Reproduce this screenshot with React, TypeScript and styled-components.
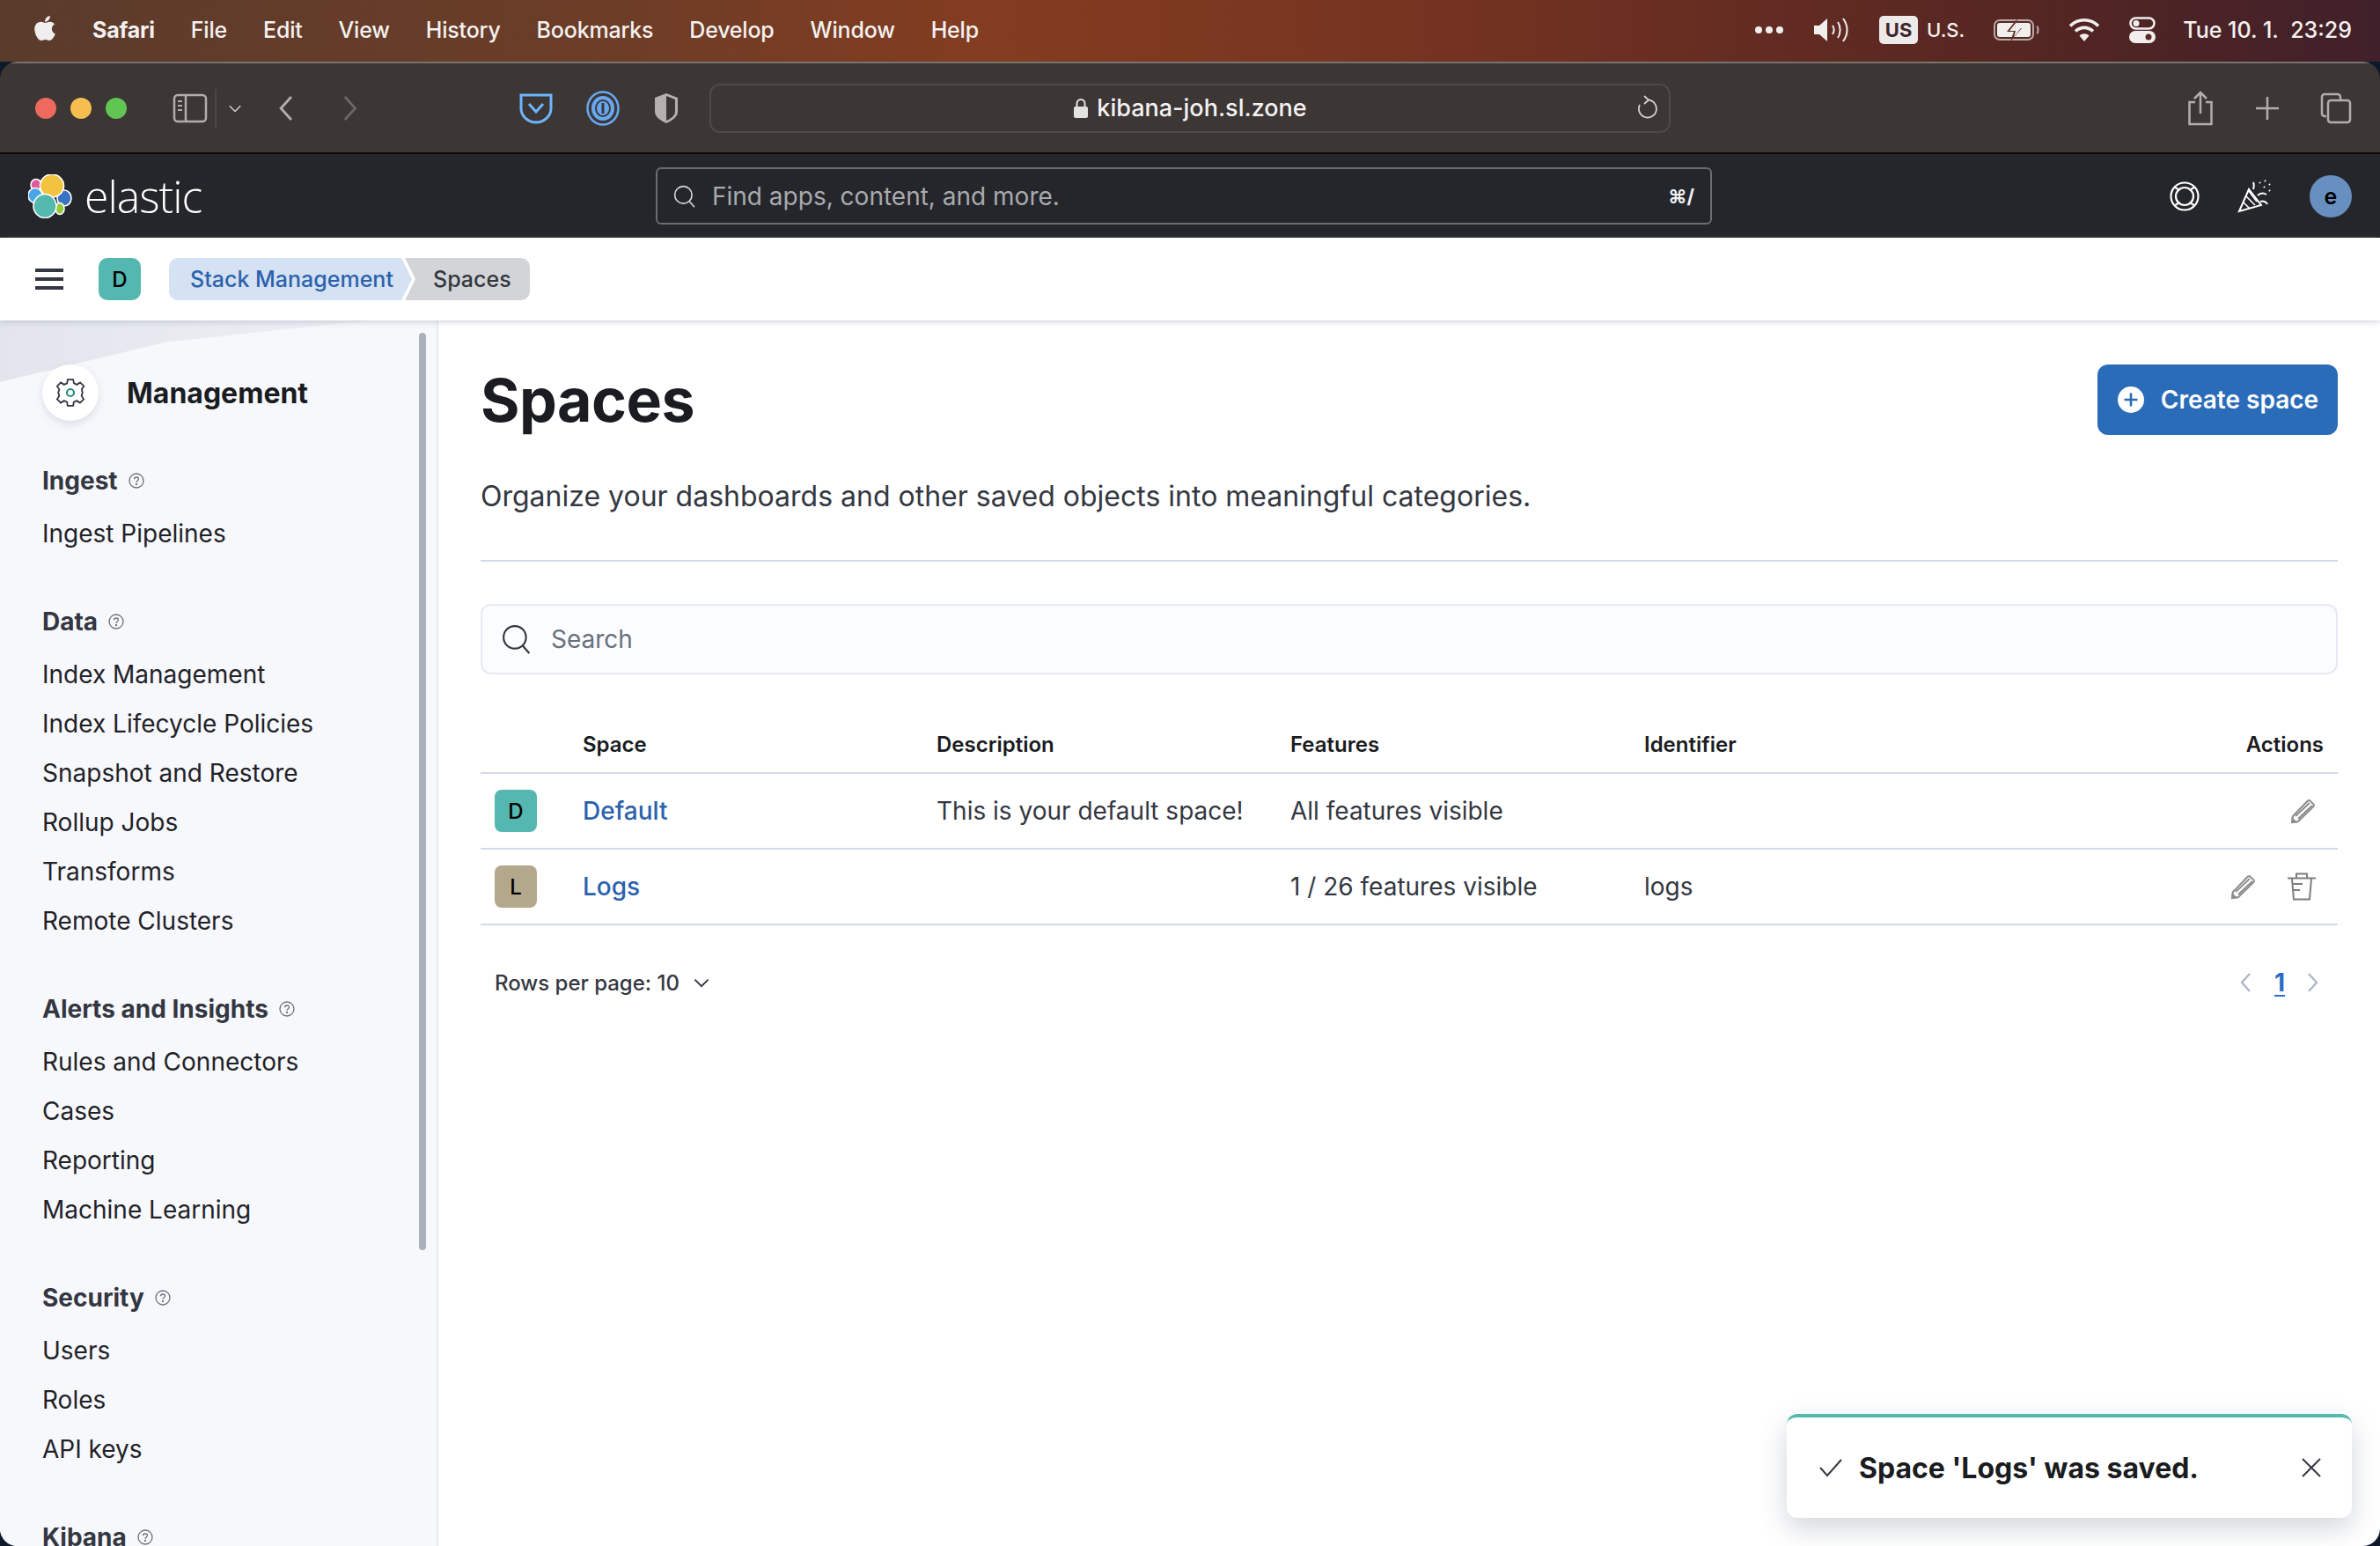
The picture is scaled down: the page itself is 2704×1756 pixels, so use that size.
import { createGlobalStyle } from "styled-components";
import styled from "styled-components";
import { FaApple } from "react-icons/fa";

const GlobalStyle = createGlobalStyle`
  html, body {
    margin: 0;
    padding: 0;
    background: #0c1a2c;
  }
  * {
    box-sizing: border-box;
  }
`;

const sans = `Inter, "Liberation Sans", sans-serif`;

const menuLeft = ["File", "Edit", "View", "History", "Bookmarks", "Develop", "Window", "Help"];

const navSections = [
  { title: "Ingest", items: ["Ingest Pipelines"] },
  {
    title: "Data",
    items: [
      "Index Management",
      "Index Lifecycle Policies",
      "Snapshot and Restore",
      "Rollup Jobs",
      "Transforms",
      "Remote Clusters",
    ],
  },
  {
    title: "Alerts and Insights",
    items: ["Rules and Connectors", "Cases", "Reporting", "Machine Learning"],
  },
  { title: "Security", items: ["Users", "Roles", "API keys"] },
  { title: "Kibana", items: [] as string[] },
];

const HelpIcon = () => (
  <svg width="18" height="18" viewBox="0 0 18 18" fill="none" stroke="#69707d" strokeWidth="1.3">
    <circle cx="9" cy="9" r="8" />
    <path d="M6.6 7.2c0-1.4 1-2.2 2.4-2.2s2.4.9 2.4 2.1c0 1.9-2.4 1.8-2.4 3.7" />
    <circle cx="9" cy="13" r=".5" fill="#69707d" />
  </svg>
);

const EditIcon = () => (
  <svg width="30" height="30" viewBox="0 0 30 30" fill="none" stroke="#8e8e8e" strokeWidth="2">
    <path d="M2 28l1-7L20 3.5l2-.5 5 5-.5 2L9 27z" />
    <path d="M6 21L22 6M9 24L25 9" />
    <path d="M1.5 28.5v-7l7 7z" fill="#8e8e8e" stroke="none" />
  </svg>
);

const TrashIcon = () => (
  <svg width="34" height="34" viewBox="0 0 34 34" fill="none" stroke="#7d7d7d" strokeWidth="2">
    <path d="M1 7.5h32M11 7V2.5h12V7" />
    <path d="M6 8l2 23.5h18L28 8" />
    <path d="M7 14h11M8 21h7" />
  </svg>
);

const Chevron = ({ dir, color, size = 26 }: { dir: "left" | "right" | "down"; color: string; size?: number }) => {
  const d = dir === "left" ? "M16 3L7 13l9 10" : dir === "right" ? "M9 3l9 10-9 10" : "M4 9l9 9 9-9";
  return (
    <svg width={size} height={size} viewBox="0 0 26 26" fill="none" stroke={color} strokeWidth="2.2">
      <path d={d} />
    </svg>
  );
};

const SearchGlyph = ({ color, size }: { color: string; size: number }) => (
  <svg width={size} height={size} viewBox="0 0 32 32" fill="none" stroke={color} strokeWidth="2">
    <circle cx="14" cy="14" r="12" />
    <path d="M22.5 23l7 8" />
  </svg>
);

const ElasticLogo = () => (
  <svg width="50" height="50" viewBox="0 0 50 50">
    <g stroke="#fff" strokeWidth="1.6">
      <ellipse cx="9" cy="12" rx="6" ry="6.5" fill="#dd5a9c" />
      <ellipse cx="8" cy="24" rx="8" ry="8.5" fill="#4aa5e8" />
      <ellipse cx="41" cy="27" rx="8" ry="9" fill="#3a72c4" />
      <ellipse cx="36" cy="39" rx="5" ry="6.5" fill="#97c83c" />
      <ellipse cx="27" cy="13" rx="13.5" ry="13" fill="#f3c23f" />
      <ellipse cx="19" cy="36" rx="13" ry="13.5" fill="#54bab0" />
    </g>
  </svg>
);

const App = () => {
  return (
    <Screen>
      <GlobalStyle />
      <MenuBar>
        <MenuGroup>
          <AppleMark>
            <FaApple size={32} color="#f1eeee" />
          </AppleMark>
          <MenuItem bold>Safari</MenuItem>
          {menuLeft.map((m) => (
            <MenuItem key={m}>{m}</MenuItem>
          ))}
        </MenuGroup>
        <StatusGroup>
          <svg width="34" height="10" viewBox="0 0 34 10" fill="#f1eeee">
            <circle cx="5" cy="5" r="4" />
            <circle cx="17" cy="5" r="4" />
            <circle cx="29" cy="5" r="4" />
          </svg>
          <svg width="42" height="30" viewBox="0 0 42 30" fill="none" stroke="#f1eeee" strokeWidth="2">
            <path d="M1 10h6l9-8v26l-9-8H1z" fill="#f1eeee" stroke="none" />
            <path d="M22 10c2 3 2 7 0 10M28 6c3.500 5 3.500 13 0 18M34 2c6 8 6 18 0 26" />
          </svg>
          <LangGroup>
            <LangBadge>US</LangBadge>
            <LangText>U.S.</LangText>
          </LangGroup>
          <svg width="52" height="26" viewBox="0 0 52 26" fill="none">
            <rect x="1" y="2" width="44" height="22" rx="6" stroke="#b9a9a5" strokeWidth="2" />
            <rect x="4" y="5" width="38" height="16" rx="3" fill="#f1eeee" />
            <path d="M49 9c2 1 2 7 0 8" stroke="#b9a9a5" strokeWidth="2" />
            <path d="M27 0L15 15h8l-4 11 13-15h-8z" fill="#5a2a24" />
            <path d="M26 4l-8 10h7l-2 7 8-10h-7z" fill="#f1eeee" />
          </svg>
          <svg width="36" height="28" viewBox="0 0 36 28" fill="none" stroke="#f1eeee" strokeWidth="3.600">
            <path d="M2 9.500c9-9 23-9 32 0M8 15.500c6-5.500 14-5.500 20 0" />
            <path d="M12.500 20.500c3.500-3 7.500-3 11 0L18 27z" fill="#f1eeee" stroke="none" />
          </svg>
          <svg width="30" height="30" viewBox="0 0 30 30" fill="none">
            <rect x="1.500" y="1.500" width="27" height="12" rx="6" stroke="#f1eeee" strokeWidth="2.500" />
            <circle cx="8" cy="7.500" r="3.500" fill="#f1eeee" />
            <rect x="0" y="16" width="30" height="14" rx="7" fill="#f1eeee" />
            <circle cx="22" cy="23" r="3.500" fill="#5a2a24" />
          </svg>
          <Clock>Tue 10. 1.&nbsp; 23:29</Clock>
        </StatusGroup>
      </MenuBar>

      <BrowserWindow>
        <Toolbar>
          <ToolbarLeft>
            <Lights>
              <Light color="#ee6a5f" />
              <Light color="#f5be4f" />
              <Light color="#61c554" />
            </Lights>
            <SidebarToggle>
              <svg width="40" height="34" viewBox="0 0 40 34" fill="none" stroke="#b3aeac" strokeWidth="2.500">
                <rect x="2" y="2" width="36" height="30" rx="4" />
                <path d="M15 2v30" />
                <path d="M6 9h5M6 14h5M6 19h5" strokeWidth="2" />
              </svg>
              <ToggleDivider />
              <Chevron dir="down" color="#d4d0ce" size={18} />
            </SidebarToggle>
            <BackForward>
              <Chevron dir="left" color="#b3aeac" size={34} />
              <Chevron dir="right" color="#6b6664" size={34} />
            </BackForward>
          </ToolbarLeft>
          <Extensions>
            <svg width="38" height="36" viewBox="0 0 38 36" fill="none">
              <path d="M2 3h34v15c0 9-8 16-17 16S2 27 2 18z" stroke="#6db6fb" strokeWidth="3" />
              <path d="M11 13l8 9 8-9" stroke="#6db6fb" strokeWidth="3" />
            </svg>
            <svg width="38" height="40" viewBox="0 0 38 40" fill="none">
              <ellipse cx="19" cy="20" rx="17.500" ry="18.500" stroke="#66a8f2" strokeWidth="2.500" />
              <ellipse cx="19" cy="20" rx="13" ry="14" fill="#66a8f2" />
              <ellipse cx="19" cy="20" rx="8" ry="9" stroke="#3c3635" strokeWidth="2" />
              <path d="M19 14v12" stroke="#3c3635" strokeWidth="3" />
            </svg>
            <svg width="30" height="36" viewBox="0 0 30 36">
              <path d="M15 1l13 5v16c0 6-8 11-13 13C10 33 2 28 2 22V6z" fill="#b5b0ae" />
              <path d="M15 4l10 4v14c0 5-6 8-10 10z" fill="#3c3635" />
            </svg>
          </Extensions>
          <UrlBar>
            <UrlCenter>
              <svg width="18" height="24" viewBox="0 0 18 24">
                <path d="M4.500 11V6.500a4.500 4.500 0 019 0V11" fill="none" stroke="#e4e2e1" strokeWidth="2" />
                <rect x="1" y="10" width="16" height="13" rx="2" fill="#e4e2e1" />
              </svg>
              <UrlText>kibana-joh.sl.zone</UrlText>
            </UrlCenter>
            <ReloadSlot>
              <svg width="24" height="28" viewBox="0 0 24 28" fill="none" stroke="#d4d0ce" strokeWidth="1.800">
                <path d="M12 5.500a10 10 0 11-9 5.500" />
                <path d="M8 1l5 4.500L8 10" />
              </svg>
            </ReloadSlot>
          </UrlBar>
          <ToolbarRight>
            <svg width="32" height="40" viewBox="0 0 32 40" fill="none" stroke="#b3aeac" strokeWidth="2.500">
              <path d="M10 13H3.500v25h25V13H22" />
              <path d="M16 26V2M9 9l7-7 7 7" />
            </svg>
            <svg width="28" height="28" viewBox="0 0 28 28" stroke="#b3aeac" strokeWidth="2.500">
              <path d="M14 1v26M1 14h26" />
            </svg>
            <svg width="36" height="36" viewBox="0 0 36 36" fill="none" stroke="#b3aeac" strokeWidth="2.500">
              <path d="M7 27H5a3 3 0 01-3-3V5a3 3 0 013-3h15a3 3 0 013 3v3" />
              <rect x="9" y="9" width="25" height="25" rx="3" />
            </svg>
          </ToolbarRight>
        </Toolbar>

        <KibanaHeader>
          <Brand>
            <ElasticLogo />
            <Wordmark>elastic</Wordmark>
          </Brand>
          <GlobalSearch>
            <SearchGlyph color="#d6d7da" size={26} />
            <GlobalSearchText>Find apps, content, and more.</GlobalSearchText>
            <Shortcut>⌘/</Shortcut>
          </GlobalSearch>
          <HeaderActions>
            <svg width="36" height="36" viewBox="0 0 36 36" fill="none" stroke="#fff" strokeWidth="2.200">
              <circle cx="18" cy="18" r="15.500" />
              <circle cx="18" cy="18" r="10" />
              <path d="M7 8c3 1 4 2 4.500 4M29 8c-3 1-4 2-4.500 4M7 28c3-1 4-2 4.500-4M29 28c-3-1-4-2-4.500-4" />
            </svg>
            <svg width="40" height="40" viewBox="0 0 40 40" fill="none" stroke="#fff" strokeWidth="2">
              <path d="M2 37l11-25 14 18z" />
              <path d="M7 27l7 7M10 20l10 10M13 14l9 12" strokeWidth="1.600" />
              <path d="M18 12c1-3 1-6 0-8M23 19c3-3 7-3 10-1M26 26c3-1 7 0 8 3" />
              <path d="M25 4l1 1M31 2l1 1M36 6l1 1M30 9l1 1M36 13l1 1" strokeWidth="2.200" />
            </svg>
            <UserBadge>e</UserBadge>
          </HeaderActions>
        </KibanaHeader>

        <SubHeader>
          <Hamburger>
            <span />
            <span />
            <span />
          </Hamburger>
          <SpaceAvatar color="#54b8b0" small>
            D
          </SpaceAvatar>
          <Crumbs>
            <CrumbLink>Stack Management</CrumbLink>
            <CrumbCurrent>Spaces</CrumbCurrent>
          </Crumbs>
        </SubHeader>

        <Body>
          <Sidebar>
            <ScrollThumb />
            <NavTitleRow>
              <GearCircle>
                <svg width="34" height="34" viewBox="0 0 32 32" fill="none">
                  <path
                    d="M13 2h6l.8 4 3.200 1.400 3.400-2.300 4 4-2.300 3.400L29 16l-1.100 3.500 2.300 3.400-4 4-3.400-2.300L19.600 26l-.6 4h-6l-.6-4-3.200-1.400-3.400 2.300-4-4 2.300-3.400L3 16l1.100-3.500-2.300-3.400 4-4 3.400 2.300L12.400 6z"
                    stroke="#343741"
                    strokeWidth="1.700"
                  />
                  <circle cx="16" cy="16" r="3.800" stroke="#2b8c7e" strokeWidth="2" />
                </svg>
              </GearCircle>
              <NavTitle>Management</NavTitle>
            </NavTitleRow>
            {navSections.map((s) => (
              <NavSection key={s.title}>
                <SectionHead>
                  {s.title}
                  <HelpIcon />
                </SectionHead>
                {s.items.map((i) => (
                  <NavLink key={i}>{i}</NavLink>
                ))}
              </NavSection>
            ))}
          </Sidebar>

          <Main>
            <PageHead>
              <PageTitle>Spaces</PageTitle>
              <CreateButton>
                <svg width="32" height="32" viewBox="0 0 32 32">
                  <circle cx="16" cy="16" r="15" fill="#fff" />
                  <path d="M16 8.500v15M8.500 16h15" stroke="#2b6cb8" strokeWidth="2.600" />
                </svg>
                Create space
              </CreateButton>
            </PageHead>
            <Lead>Organize your dashboards and other saved objects into meaningful categories.</Lead>
            <Rule />
            <SearchBox>
              <SearchGlyph color="#343741" size={34} />
              <SearchText>Search</SearchText>
            </SearchBox>

            <HeadRow>
              <span />
              <HeadCell>Space</HeadCell>
              <HeadCell>Description</HeadCell>
              <HeadCell>Features</HeadCell>
              <HeadCell>Identifier</HeadCell>
              <HeadCell alignRight>Actions</HeadCell>
            </HeadRow>
            <TableRow>
              <AvatarCell>
                <SpaceAvatar color="#54b8b0">D</SpaceAvatar>
              </AvatarCell>
              <SpaceLink>Default</SpaceLink>
              <Cell>This is your default space!</Cell>
              <Cell>All features visible</Cell>
              <Cell />
              <ActionsCell>
                <EditIcon />
              </ActionsCell>
            </TableRow>
            <TableRow>
              <AvatarCell>
                <SpaceAvatar color="#b4a88c">L</SpaceAvatar>
              </AvatarCell>
              <SpaceLink>Logs</SpaceLink>
              <Cell />
              <Cell>1 / 26 features visible</Cell>
              <Cell>logs</Cell>
              <ActionsCell>
                <EditIcon />
                <TrashIcon />
              </ActionsCell>
            </TableRow>

            <PagerRow>
              <RowsPerPage>
                Rows per page: 10
                <Chevron dir="down" color="#343741" size={22} />
              </RowsPerPage>
              <Pager>
                <Chevron dir="left" color="#abb4c4" />
                <PageNumber>1</PageNumber>
                <Chevron dir="right" color="#abb4c4" />
              </Pager>
            </PagerRow>
          </Main>

          <Toast>
            <svg width="28" height="22" viewBox="0 0 28 22" fill="none" stroke="#343741" strokeWidth="2">
              <path d="M2 11l8 9L26 2" />
            </svg>
            <ToastText>Space 'Logs' was saved.</ToastText>
            <svg width="24" height="24" viewBox="0 0 24 24" stroke="#343741" strokeWidth="2">
              <path d="M2 2l20 20M22 2L2 22" />
            </svg>
          </Toast>
        </Body>
      </BrowserWindow>
    </Screen>
  );
};

export default App;

const Screen = styled.div`
  width: 2704px;
  height: 1756px;
  overflow: hidden;
  display: flex;
  flex-direction: column;
  background: #0c1a2c;
  font-family: ${sans};
`;

const MenuBar = styled.div`
  height: 70px;
  flex: none;
  display: flex;
  align-items: center;
  justify-content: space-between;
  padding: 0 32px 3px 36px;
  background: linear-gradient(90deg, #5a3b2b 0%, #6c3d27 25%, #843c20 42%, #733221 62%, #552622 85%, #40202a 100%);
  color: #f4f1f0;
`;

const MenuGroup = styled.div`
  display: flex;
  align-items: center;
  gap: 41px;
`;

const AppleMark = styled.div`
  display: flex;
  width: 30px;
  margin-right: -2px;
  margin-top: -4px;
`;

const MenuItem = styled.span<{ bold?: boolean }>`
  font-size: 25px;
  font-weight: ${({ bold }) => (bold ? 700 : 500)};
  letter-spacing: -0.2px;
`;

const StatusGroup = styled.div`
  display: flex;
  align-items: center;
  gap: 33px;
`;

const LangGroup = styled.div`
  display: flex;
  align-items: center;
  gap: 10px;
`;

const LangBadge = styled.span`
  width: 44px;
  height: 32px;
  border-radius: 5px;
  background: #eeeaea;
  color: #40262a;
  display: flex;
  align-items: center;
  justify-content: center;
  font-size: 22px;
  font-weight: 700;
`;

const LangText = styled.span`
  font-size: 22px;
  font-weight: 500;
`;

const Clock = styled.span`
  font-size: 25px;
  font-weight: 500;
  white-space: nowrap;
  margin-left: -2px;
`;

const BrowserWindow = styled.div`
  position: relative;
  flex: 1;
  min-height: 0;
  display: flex;
  flex-direction: column;
  border-radius: 20px;
  overflow: hidden;
`;

const Toolbar = styled.div`
  height: 105px;
  flex: none;
  display: flex;
  align-items: center;
  background: #3c3635;
  border-top: 2px solid #77726f;
  border-bottom: 2px solid #0c0a0a;
  padding: 0 32px 0 40px;
`;

const ToolbarLeft = styled.div`
  width: 550px;
  display: flex;
  align-items: center;
`;

const Lights = styled.div`
  display: flex;
  gap: 16px;
`;

const Light = styled.span<{ color: string }>`
  width: 24px;
  height: 24px;
  border-radius: 50%;
  background: ${({ color }) => color};
`;

const SidebarToggle = styled.div`
  display: flex;
  align-items: center;
  margin-left: 52px;
`;

const ToggleDivider = styled.span`
  width: 2px;
  height: 44px;
  background: #4d4846;
  margin: 0 12px 0 8px;
`;

const BackForward = styled.div`
  display: flex;
  gap: 36px;
  margin-left: 34px;
`;

const Extensions = styled.div`
  width: 216px;
  display: flex;
  align-items: center;
  gap: 38px;
`;

const UrlBar = styled.div`
  position: relative;
  width: 1092px;
  height: 56px;
  display: flex;
  align-items: center;
  justify-content: center;
  border: 2px solid #4f4a48;
  border-radius: 12px;
`;

const UrlCenter = styled.div`
  display: flex;
  align-items: center;
  gap: 9px;
`;

const UrlText = styled.span`
  font-size: 27px;
  font-weight: 500;
  color: #f4f2f1;
`;

const ReloadSlot = styled.span`
  position: absolute;
  right: 12px;
  top: 11px;
  display: flex;
`;

const ToolbarRight = styled.div`
  flex: 1;
  display: flex;
  align-items: center;
  justify-content: flex-end;
  gap: 46px;
`;

const KibanaHeader = styled.div`
  height: 95px;
  flex: none;
  display: flex;
  align-items: center;
  background: #25262b;
  padding: 0 32px;
`;

const Brand = styled.div`
  width: 713px;
  display: flex;
  align-items: center;
  gap: 14px;
`;

const Wordmark = styled.span`
  font-family: "Open Sans", sans-serif;
  font-size: 50px;
  font-weight: 300;
  letter-spacing: -1px;
  color: #fff;
`;

const GlobalSearch = styled.div`
  width: 1200px;
  height: 65px;
  display: flex;
  align-items: center;
  gap: 18px;
  padding: 0 18px;
  border: 2px solid #6b6d72;
  border-radius: 6px;
`;

const GlobalSearchText = styled.span`
  flex: 1;
  font-size: 28px;
  color: #a9aaae;
`;

const Shortcut = styled.span`
  font-size: 22px;
  font-weight: 700;
  color: #f0f0f0;
`;

const HeaderActions = styled.div`
  flex: 1;
  display: flex;
  align-items: center;
  justify-content: flex-end;
  gap: 42px;
`;

const UserBadge = styled.span`
  width: 48px;
  height: 48px;
  border-radius: 50%;
  background: #6790c0;
  color: #000;
  display: flex;
  align-items: center;
  justify-content: center;
  font-size: 25px;
  font-weight: 600;
`;

const SubHeader = styled.div`
  position: relative;
  z-index: 2;
  height: 94px;
  flex: none;
  display: flex;
  align-items: center;
  background: #fff;
  padding-left: 40px;
  box-shadow: 0 2px 6px rgba(152, 162, 179, 0.45);
`;

const Hamburger = styled.div`
  width: 32px;
  display: flex;
  flex-direction: column;
  gap: 6px;
  margin-right: 40px;

  span {
    height: 4px;
    background: #343741;
  }
`;

const SpaceAvatar = styled.span<{ color: string; small?: boolean }>`
  width: 48px;
  height: 48px;
  border-radius: ${({ small }) => (small ? "10px" : "8px")};
  background: ${({ color }) => color};
  color: #000;
  display: flex;
  align-items: center;
  justify-content: center;
  font-size: 24px;
  font-weight: 500;
`;

const Crumbs = styled.div`
  display: flex;
  margin-left: 32px;
  height: 48px;
`;

const CrumbLink = styled.span`
  width: 276px;
  padding-left: 24px;
  display: flex;
  align-items: center;
  font-size: 25px;
  font-weight: 500;
  color: #2b62ad;
  background: #d5e2f3;
  border-radius: 10px 0 0 10px;
  clip-path: polygon(0 0, 264px 0, 276px 50%, 264px 100%, 0 100%);
`;

const CrumbCurrent = styled.span`
  width: 142px;
  margin-left: -8px;
  padding-left: 32px;
  display: flex;
  align-items: center;
  font-size: 25px;
  font-weight: 500;
  color: #343741;
  background: #d3d4d7;
  border-radius: 0 10px 10px 0;
  clip-path: polygon(0 0, 100% 0, 100% 100%, 0 100%, 12px 50%);
`;

const Body = styled.div`
  position: relative;
  flex: 1;
  min-height: 0;
  display: flex;
  background: #fff;
`;

const Sidebar = styled.div`
  position: relative;
  width: 498px;
  flex: none;
  overflow: hidden;
  padding: 50px 0 0 48px;
  background: #f7f8fc;
  border-right: 2px solid #e8eaf1;

  &::before {
    content: "";
    position: absolute;
    left: 0;
    top: 0;
    width: 420px;
    height: 70px;
    background: linear-gradient(90deg, #e2e5ec, #eef0f5);
    clip-path: polygon(0 0, 100% 0, 45% 35%, 0 100%);
  }
`;

const ScrollThumb = styled.div`
  position: absolute;
  right: 12px;
  top: 14px;
  width: 8px;
  height: 1042px;
  border-radius: 4px;
  background: #adb2ba;
`;

const NavTitleRow = styled.div`
  position: relative;
  display: flex;
  align-items: center;
  gap: 32px;
  height: 64px;
  margin-bottom: 40px;
`;

const GearCircle = styled.span`
  width: 64px;
  height: 64px;
  border-radius: 50%;
  background: #fff;
  display: flex;
  align-items: center;
  justify-content: center;
  box-shadow: 0 4px 10px rgba(152, 162, 179, 0.3);
`;

const NavTitle = styled.span`
  font-size: 32px;
  font-weight: 700;
  color: #1a1c21;
`;

const NavSection = styled.div`
  margin-bottom: 44px;
`;

const SectionHead = styled.div`
  height: 56px;
  display: flex;
  align-items: center;
  gap: 12px;
  font-size: 28px;
  font-weight: 700;
  color: #343741;
  margin-bottom: 4px;
`;

const NavLink = styled.div`
  height: 56px;
  display: flex;
  align-items: center;
  font-size: 28px;
  color: #1f2228;
`;

const Main = styled.div`
  flex: 1;
  min-width: 0;
  padding: 50px 48px 0 48px;
`;

const PageHead = styled.div`
  display: flex;
  align-items: center;
  justify-content: space-between;
  height: 80px;
`;

const PageTitle = styled.h1`
  margin: 0;
  font-size: 68px;
  font-weight: 700;
  color: #1a1c21;
  letter-spacing: -0.5px;
`;

const CreateButton = styled.div`
  width: 273px;
  height: 80px;
  border-radius: 12px;
  background: #2b6cb8;
  color: #fff;
  display: flex;
  align-items: center;
  justify-content: center;
  gap: 18px;
  font-size: 28px;
  font-weight: 600;
`;

const Lead = styled.p`
  margin: 46px 0 0;
  font-size: 32px;
  line-height: 48px;
  color: #343741;
`;

const Rule = styled.div`
  height: 2px;
  background: #d3dae6;
  margin-top: 48px;
`;

const SearchBox = styled.div`
  height: 80px;
  margin-top: 48px;
  display: flex;
  align-items: center;
  gap: 22px;
  padding: 0 22px;
  background: #fbfcfd;
  border: 2px solid #e6e9f1;
  border-radius: 12px;
`;

const SearchText = styled.span`
  font-size: 28px;
  color: #69707d;
`;

const tableColumns = "116px 402px 402px 402px 1fr 220px";

const HeadRow = styled.div`
  display: grid;
  grid-template-columns: ${tableColumns};
  align-items: center;
  height: 66px;
  margin-top: 47px;
  border-bottom: 2px solid #d3dae6;
`;

const HeadCell = styled.span<{ alignRight?: boolean }>`
  font-size: 24px;
  font-weight: 600;
  color: #1a1c21;
  text-align: ${({ alignRight }) => (alignRight ? "right" : "left")};
  padding-right: ${({ alignRight }) => (alignRight ? "16px" : "0")};
`;

const TableRow = styled.div`
  display: grid;
  grid-template-columns: ${tableColumns};
  align-items: center;
  height: 86px;
  border-bottom: 2px solid #d3dae6;
`;

const AvatarCell = styled.span`
  padding-left: 16px;
`;

const SpaceLink = styled.span`
  font-size: 28px;
  font-weight: 500;
  color: #2b62ad;
`;

const Cell = styled.span`
  font-size: 28px;
  color: #343741;
`;

const ActionsCell = styled.span`
  display: flex;
  justify-content: flex-end;
  align-items: center;
  gap: 34px;
  padding-right: 24px;
`;

const PagerRow = styled.div`
  display: flex;
  align-items: center;
  justify-content: space-between;
  height: 64px;
  margin-top: 33px;
  padding: 0 16px;
`;

const RowsPerPage = styled.span`
  display: flex;
  align-items: center;
  gap: 14px;
  font-size: 24px;
  font-weight: 500;
  color: #343741;
`;

const Pager = styled.div`
  display: flex;
  align-items: center;
  gap: 18px;
`;

const PageNumber = styled.span`
  font-size: 28px;
  font-weight: 700;
  color: #2b6cc4;
  text-decoration: underline;
  text-underline-offset: 4px;
`;

const Toast = styled.div`
  position: absolute;
  right: 32px;
  bottom: 32px;
  width: 642px;
  height: 118px;
  display: flex;
  align-items: center;
  padding: 0 34px 0 36px;
  gap: 18px;
  border-radius: 12px;
  background: #fff;
  border-top: 4px solid #54bab0;
  box-shadow: 0 12px 30px rgba(80, 90, 110, 0.25);
`;

const ToastText = styled.span`
  flex: 1;
  font-size: 32px;
  font-weight: 700;
  color: #1a1c21;
`;
